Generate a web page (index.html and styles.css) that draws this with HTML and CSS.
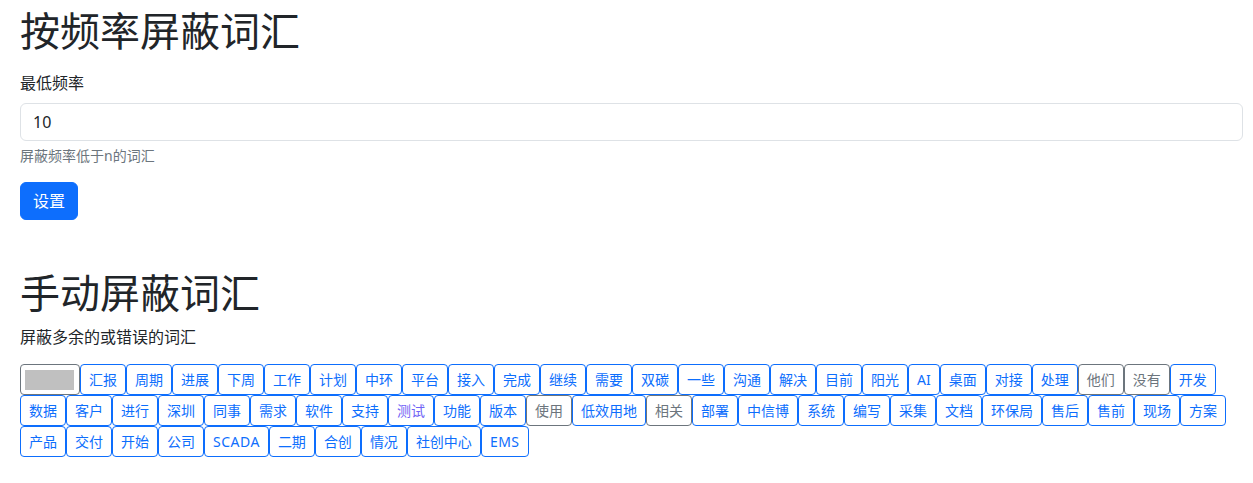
FILE: index.html
```html
<!DOCTYPE html>
<html lang="zh-CN">
<head>
<meta charset="utf-8">
<title>屏蔽词汇</title>
<link rel="stylesheet" href="styles.css">
</head>
<body>
<div class="page">
  <section class="freq">
    <h1 class="title">按频率屏蔽词汇</h1>
    <label class="label" for="minfreq">最低频率</label>
    <input class="input" id="minfreq" type="text" value="10">
    <div class="help">屏蔽频率低于n的词汇</div>
    <button class="btn-primary" type="button">设置</button>
  </section>
  <section class="manual">
    <h1 class="title title-2">手动屏蔽词汇</h1>
    <p class="desc">屏蔽多余的或错误的词汇</p>
    <div class="tags"><span class="tag tag-gray tag-box"><span class="swatch"></span></span><span class="tag">汇报</span><span class="tag">周期</span><span class="tag">进展</span><span class="tag">下周</span><span class="tag">工作</span><span class="tag">计划</span><span class="tag">中环</span><span class="tag">平台</span><span class="tag">接入</span><span class="tag">完成</span><span class="tag">继续</span><span class="tag">需要</span><span class="tag">双碳</span><span class="tag">一些</span><span class="tag">沟通</span><span class="tag">解决</span><span class="tag">目前</span><span class="tag">阳光</span><span class="tag">AI</span><span class="tag">桌面</span><span class="tag">对接</span><span class="tag">处理</span><span class="tag tag-gray">他们</span><span class="tag tag-gray">没有</span><span class="tag">开发</span><span class="tag">数据</span><span class="tag">客户</span><span class="tag">进行</span><span class="tag">深圳</span><span class="tag">同事</span><span class="tag">需求</span><span class="tag">软件</span><span class="tag">支持</span><span class="tag tag-visited">测试</span><span class="tag">功能</span><span class="tag">版本</span><span class="tag tag-gray">使用</span><span class="tag">低效用地</span><span class="tag tag-gray">相关</span><span class="tag">部署</span><span class="tag">中信博</span><span class="tag">系统</span><span class="tag">编写</span><span class="tag">采集</span><span class="tag">文档</span><span class="tag">环保局</span><span class="tag">售后</span><span class="tag">售前</span><span class="tag">现场</span><span class="tag">方案</span><span class="tag">产品</span><span class="tag">交付</span><span class="tag">开始</span><span class="tag">公司</span><span class="tag tag-latin">SCADA</span><span class="tag">二期</span><span class="tag">合创</span><span class="tag">情况</span><span class="tag">社创中心</span><span class="tag tag-latin">EMS</span></div>
  </section>
</div>
</body>
</html>
```
FILE: styles.css
```css
* { box-sizing: border-box; }
html, body {
  margin: 0;
  padding: 0;
  background: #fff;
}
body {
  font-family: "Noto Sans", "Noto Sans CJK SC", sans-serif;
  font-size: 16px;
  line-height: 1.5;
  color: #212529;
}
.page {
  padding: 0 10px 0 20px;
}
.title {
  font-size: 40px;
  font-weight: 400;
  line-height: 48px;
  margin: 7px 0 16px;
}
.title-2 {
  margin: 49px 0 8px;
}
.label {
  display: block;
  margin-bottom: 8px;
  line-height: 24px;
}
.input {
  display: block;
  width: 100%;
  height: 38px;
  padding: 6px 12px;
  font: inherit;
  color: #212529;
  border: 1px solid #dee2e6;
  border-radius: 6px;
  background: #fff;
  outline: none;
}
.help {
  margin-top: 4px;
  font-size: 14px;
  line-height: 21px;
  color: #6c757d;
}
.btn-primary {
  display: block;
  margin-top: 16px;
  height: 38px;
  padding: 0 12px;
  font: inherit;
  color: #fff;
  background: #0d6efd;
  border: 1px solid #0d6efd;
  border-radius: 6px;
}
.desc {
  margin: 0 0 15px;
  line-height: 24px;
}
.tags {
  display: flex;
  flex-wrap: wrap;
}
.tag {
  display: inline-block;
  height: 31px;
  padding: 4px 8px;
  font-size: 14px;
  line-height: 21px;
  color: #0d6efd;
  border: 1px solid #0d6efd;
  border-radius: 4px;
  white-space: nowrap;
}
.tag-latin {
  letter-spacing: 0.5px;
}
.tag-gray {
  color: #6c757d;
  border-color: #6c757d;
}
.tag-visited {
  color: #6f63f5;
}
.tag-box {
  padding: 4px 5px 4px 4px;
}
.swatch {
  display: block;
  width: 49px;
  height: 20px;
  margin-top: 1px;
  background: #c0c0c0;
}
```
